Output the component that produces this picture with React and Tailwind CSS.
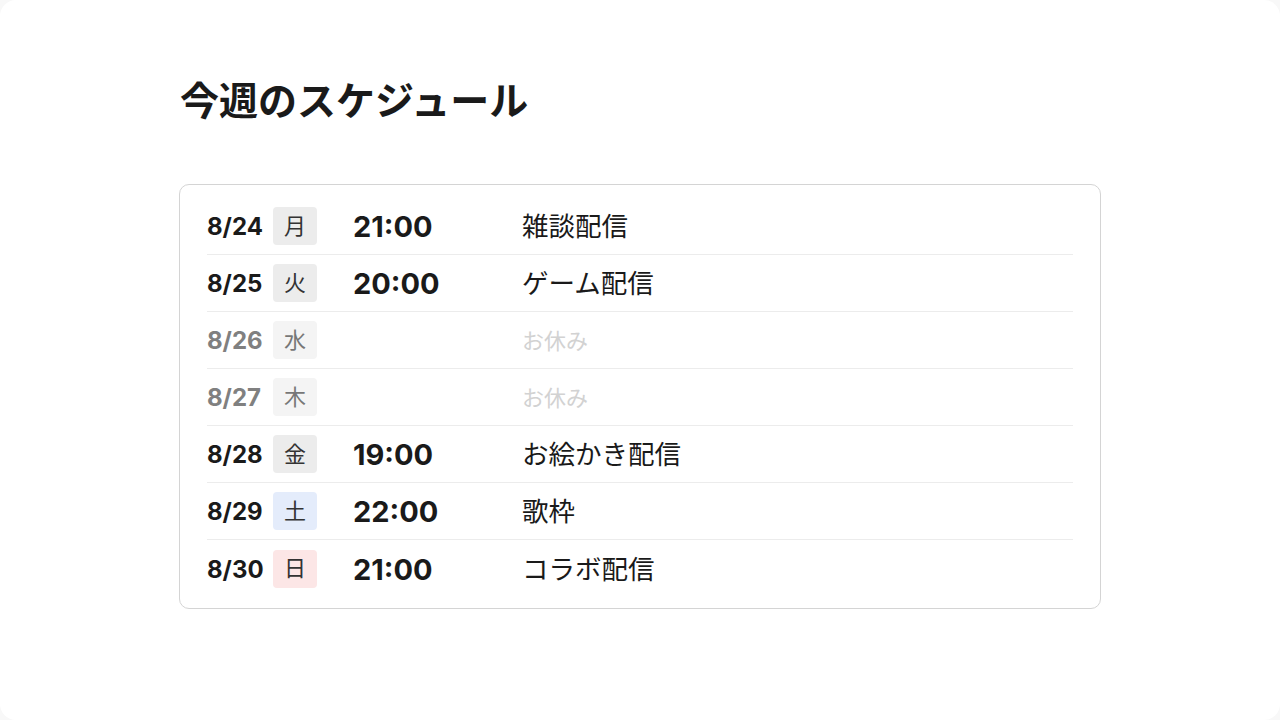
const schedule = [
    { date: '8/24', day: '月', time: '21:00', title: '雑談配信', type: 'normal' },
    { date: '8/25', day: '火', time: '20:00', title: 'ゲーム配信', type: 'normal' },
    { date: '8/26', day: '水', time: '', title: 'お休み', type: 'off' },
    { date: '8/27', day: '木', time: '', title: 'お休み', type: 'off' },
    { date: '8/28', day: '金', time: '19:00', title: 'お絵かき配信', type: 'normal' },
    { date: '8/29', day: '土', time: '22:00', title: '歌枠', type: 'sat' },
    { date: '8/30', day: '日', time: '21:00', title: 'コラボ配信', type: 'sun' },
];

const badgeStyles = {
    normal: 'bg-[#ececec] text-[#333]',
    off: 'bg-[#f4f4f4] text-[#777]',
    sat: 'bg-[#e4ecfb] text-[#333]',
    sun: 'bg-[#fce6e6] text-[#333]',
};

export default function App() {
    return (
        <div className="bg-[#f8f8f8]">
            <div
                className="min-h-screen bg-white rounded-[16px] text-[#1a1a1a]"
                style={{ fontFamily: 'Inter, "Noto Sans CJK JP", sans-serif' }}
            >
                <div className="w-[922px] mx-auto pt-[76px]">
                    {/* Header */}
                    <h1 className="text-[39px] leading-[50px] font-bold pl-px">
                        今週のスケジュール
                    </h1>

                    {/* Schedule card */}
                    <div className="mt-[58px] border border-[#d4d4d4] rounded-[10px] px-[27px] pt-[13px] pb-[11px]">
                        {schedule.map((item, i) => {
                            const off = item.type === 'off';
                            return (
                                <div
                                    key={item.date}
                                    className={`flex items-center h-[57px] ${i < schedule.length - 1 ? 'border-b border-[#ececec]' : ''}`}
                                >
                                    <span className={`w-[66px] pt-[2px] text-[24px] font-bold ${off ? 'text-[#808080]' : 'text-[#1a1a1a]'}`}>
                                        {item.date}
                                    </span>
                                    <span className={`w-[44px] h-[38px] rounded-[4px] flex items-center justify-center text-[22px] ${badgeStyles[item.type]}`}>
                                        {item.day}
                                    </span>
                                    <span className="ml-[36px] w-[169px] pt-[2px] text-[29px] font-bold">
                                        {item.time}
                                    </span>
                                    <span className={off ? 'pt-[2px] text-[22px] text-[#d2d2d2]' : 'pt-[2px] text-[26.5px] text-[#1a1a1a]'}>
                                        {item.title}
                                    </span>
                                </div>
                            );
                        })}
                    </div>
                </div>
            </div>
        </div>
    );
}
